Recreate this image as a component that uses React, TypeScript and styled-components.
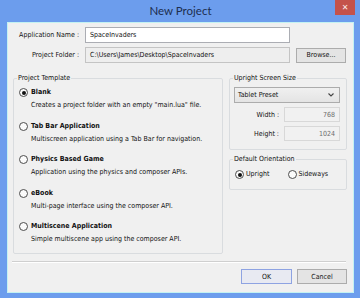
import React, { useState } from 'react';
import styled, { createGlobalStyle } from 'styled-components';

const GlobalStyle = createGlobalStyle`
  html, body {
    margin: 0;
    padding: 0;
    background: #ffffff;
  }
  * {
    box-sizing: border-box;
  }
`;

const FONT = `'DejaVu Sans Condensed', 'Liberation Sans', Arial, sans-serif`;

const Window = styled.div`
  width: 360px;
  height: 298px;
  background: #6c9ded;
  display: flex;
  flex-direction: column;
  padding: 0 6px 5px 7px;
  font-family: ${FONT};
  font-size: 7px;
  color: #111;
  white-space: nowrap;
`;

const TitleBar = styled.div`
  height: 22px;
  display: grid;
  grid-template-columns: 1fr auto 1fr;
  align-items: start;
`;

const Title = styled.div`
  grid-column: 2;
  font-family: Lato, 'Liberation Sans', sans-serif;
  font-size: 11.5px;
  line-height: 22px;
  color: #1d2e4f;
`;

const CloseButton = styled.div`
  grid-column: 3;
  justify-self: end;
  margin-right: -1px;
  width: 20px;
  height: 15px;
  background: #c4524b;
  color: #fbe9e8;
  font-family: 'DejaVu Sans', sans-serif;
  font-size: 8px;
  font-weight: bold;
  display: flex;
  align-items: center;
  justify-content: center;
`;

const Content = styled.div`
  flex: 1;
  background: #f0f0f0;
  border: 1px solid #c4f2f2;
  display: flex;
  flex-direction: column;
  overflow: hidden;
`;

const FormGrid = styled.div`
  display: grid;
  grid-template-columns: 71px 205px 50px;
  column-gap: 6px;
  row-gap: 4px;
  padding: 4px 0 0 0;
  align-items: center;
`;

const FieldLabel = styled.div`
  text-align: right;
  line-height: 12px;
`;

const TextBox = styled.div<{ $readOnly?: boolean; $align?: string }>`
  height: 16px;
  border: 1px solid ${(p) => (p.$readOnly ? '#c4c4c4' : '#abadb3')};
  background: ${(p) => (p.$readOnly ? '#eeeeee' : '#ffffff')};
  display: flex;
  align-items: center;
  justify-content: ${(p) => p.$align || 'flex-start'};
  padding: 0 4px;
  color: #111;
`;

const Button = styled.div<{ $default?: boolean; $width?: number }>`
  width: ${(p) => p.$width || 50}px;
  height: 15px;
  border: 1px solid ${(p) => (p.$default ? '#8ea3e2' : '#acacac')};
  background: ${(p) => (p.$default ? '#e8eaf2' : '#e4e4e4')};
  display: flex;
  align-items: center;
  justify-content: center;
  color: #111;
`;

const Middle = styled.div`
  display: flex;
  gap: 6px;
  padding: 0 5px;
  margin-top: 9px;
`;

const Group = styled.fieldset<{ $width: number }>`
  width: ${(p) => p.$width}px;
  margin: 0;
  border: 1px solid #d9dcdf;
  border-radius: 2px;
  padding: 1px 6px 8px 4px;
  min-width: 0;
`;

const Legend = styled.legend`
  padding: 0 1px;
  margin-left: -1px;
  line-height: 13px;
  color: #111;
`;

const RightColumn = styled.div`
  display: flex;
  flex-direction: column;
  gap: 3px;
`;

const TemplateList = styled.div`
  display: flex;
  flex-direction: column;
  gap: 8.5px;
  padding-left: 1px;
`;

const TemplateItem = styled.div`
  display: flex;
  flex-direction: column;
  cursor: default;
`;

const RadioRow = styled.div`
  display: flex;
  align-items: center;
  gap: 3px;
  line-height: 13px;
  cursor: default;
`;

const RadioCircle = styled.span<{ $checked?: boolean }>`
  width: 9px;
  height: 9px;
  border-radius: 50%;
  border: 1px solid #4d4d4d;
  background: #fbfbfb;
  display: flex;
  align-items: center;
  justify-content: center;
  flex-shrink: 0;
  &::after {
    content: '';
    width: 4px;
    height: 4px;
    border-radius: 50%;
    background: ${(p) => (p.$checked ? '#111' : 'transparent')};
  }
`;

const ItemTitle = styled.span`
  font-weight: bold;
`;

const ItemDesc = styled.div`
  padding-left: 12px;
  line-height: 12px;
`;

const Select = styled.div`
  margin-top: 1px;
  height: 16px;
  border: 1px solid #acacac;
  background: linear-gradient(#f0f0f0, #e4e4e4);
  display: flex;
  align-items: center;
  justify-content: space-between;
  padding: 0 5px 0 3px;
`;

const SizeRow = styled.div`
  display: flex;
  justify-content: flex-end;
  align-items: center;
  gap: 5px;
  margin-top: 4px;
`;

const SizeBox = styled(TextBox)`
  width: 56px;
  height: 15px;
  border-color: #d8d8d8;
  background: #f1f1f1;
  color: #6d6d6d;
`;

const OrientRow = styled.div`
  display: flex;
  padding: 1px 0 0 1px;
`;

const OrientOption = styled(RadioRow)<{ $width: number }>`
  width: ${(p) => p.$width}px;
  gap: 2px;
`;

const Separator = styled.div`
  margin: 7px 7px 0 4px;
  height: 2px;
  border-top: 1px solid #cfcfcf;
  border-bottom: 1px solid #ffffff;
`;

const ButtonRow = styled.div`
  display: flex;
  justify-content: flex-end;
  gap: 5px;
  padding: 6px 6px 0 0;
`;

const templates = [
  { name: 'Blank', desc: 'Creates a project folder with an empty "main.lua" file.' },
  { name: 'Tab Bar Application', desc: 'Multiscreen application using a Tab Bar for navigation.' },
  { name: 'Physics Based Game', desc: 'Application using the physics and composer APIs.' },
  { name: 'eBook', desc: 'Multi-page interface using the composer API.' },
  { name: 'Multiscene Application', desc: 'Simple multiscene app using the composer API.' },
];

function Chevron() {
  return (
    <svg width="6" height="4" viewBox="0 0 6 4">
      <path d="M0.5 0.5 L3 3 L5.5 0.5" fill="none" stroke="#444" strokeWidth="1.1" />
    </svg>
  );
}

export default function App() {
  const [template, setTemplate] = useState(0);
  const [orientation, setOrientation] = useState('upright');

  return (
    <>
      <GlobalStyle />
      <Window>
        <TitleBar>
          <Title>New Project</Title>
          <CloseButton>✕</CloseButton>
        </TitleBar>
        <Content>
          <FormGrid>
            <FieldLabel>Application Name :</FieldLabel>
            <TextBox>SpaceInvaders</TextBox>
            <div />
            <FieldLabel>Project Folder :</FieldLabel>
            <TextBox $readOnly>C:\Users\James\Desktop\SpaceInvaders</TextBox>
            <Button $width={50}>Browse...</Button>
          </FormGrid>

          <Middle>
            <Group $width={210}>
              <Legend>Project Template</Legend>
              <TemplateList>
                {templates.map((t, i) => (
                  <TemplateItem key={t.name} onClick={() => setTemplate(i)}>
                    <RadioRow>
                      <RadioCircle $checked={template === i} />
                      <ItemTitle>{t.name}</ItemTitle>
                    </RadioRow>
                    <ItemDesc>{t.desc}</ItemDesc>
                  </TemplateItem>
                ))}
              </TemplateList>
            </Group>

            <RightColumn>
              <Group $width={118}>
                <Legend>Upright Screen Size</Legend>
                <Select>
                  <span>Tablet Preset</span>
                  <Chevron />
                </Select>
                <SizeRow>
                  <FieldLabel>Width :</FieldLabel>
                  <SizeBox $align="flex-end">768</SizeBox>
                </SizeRow>
                <SizeRow>
                  <FieldLabel>Height :</FieldLabel>
                  <SizeBox $align="flex-end">1024</SizeBox>
                </SizeRow>
              </Group>
              <Group $width={118}>
                <Legend>Default Orientation</Legend>
                <OrientRow>
                  <OrientOption $width={56} onClick={() => setOrientation('upright')}>
                    <RadioCircle $checked={orientation === 'upright'} />
                    <span>Upright</span>
                  </OrientOption>
                  <OrientOption $width={56} onClick={() => setOrientation('sideways')}>
                    <RadioCircle $checked={orientation === 'sideways'} />
                    <span>Sideways</span>
                  </OrientOption>
                </OrientRow>
              </Group>
            </RightColumn>
          </Middle>

          <Separator />
          <ButtonRow>
            <Button $default $width={51}>OK</Button>
            <Button $width={50}>Cancel</Button>
          </ButtonRow>
        </Content>
      </Window>
    </>
  );
}
